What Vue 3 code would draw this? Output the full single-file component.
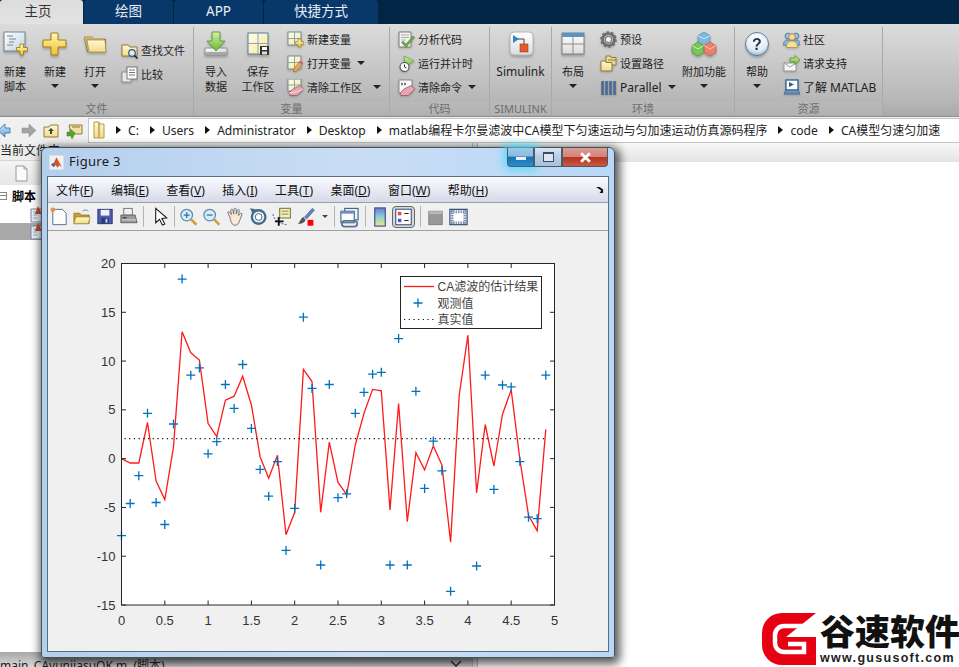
<script setup>
import { computed } from 'vue'

const icons = {
  newScript: `<rect x="2" y="1" width="21" height="19" fill="url(#gPage)" stroke="#76828c"/><path d="M5 5h6M7 8h7M7 11h5M5 14h6" stroke="#77828c"/><path d="M18 13h3.500v3.500h4v3.500h-4v4H18v-4h-3.500v-3.500H18z" fill="url(#gYel)" stroke="#96761a" stroke-width=".8"/>`,
  newPlus: `<path d="M9 2h7v7h8v7h-8v8H9v-8H1V9h8z" fill="url(#gYel)" stroke="#a37f18"/>`,
  open: `<path d="M2 6h8l2 2h12v13H5z" fill="#8d6f35"/><path d="M2 5h8l2 2h11l-1 2H6l3 12H6z" fill="#c9b06a"/><path d="M5 9h18l1 12H7z" fill="url(#gYel2)" stroke="#9c8444" stroke-width=".7"/>`,
  importData: `<path d="M2 17h22v7H2z" fill="url(#gPage)" stroke="#8c8c8c"/><path d="M2 21h22v3H2z" fill="#a8a8a8"/><path d="M9 1h8v9h5L13 20 4 10h5z" fill="url(#gGrn)" stroke="#4d8f22" stroke-width=".8"/>`,
  save: `<rect x="3" y="2" width="20" height="21" fill="url(#gYel3)" stroke="#6f8da8" stroke-width="1.200"/><path d="M13 2v21M3 12.500h20" stroke="#8ba4b8"/><rect x="15" y="15" width="9" height="9" fill="#333"/><rect x="17" y="16" width="5" height="3" fill="#fff"/><rect x="17" y="20.500" width="5" height="3" fill="#ddd"/>`,
  simulink: `<rect x="2" y="1" width="23" height="23" rx="4" fill="url(#gPage2)" stroke="#b4b4b4"/><path d="M8 8h8v6" stroke="#444" fill="none"/><path d="M5 4l6 4-6 4z" fill="#2e86c8"/><rect x="12" y="13" width="8" height="8" fill="#e05a2b" stroke="#a03c18" stroke-width=".6"/>`,
  layout: `<rect x="2" y="2" width="22" height="21" fill="url(#gPage2)" stroke="#7f7f7f"/><rect x="2" y="2" width="22" height="4" fill="#5b93c4"/><path d="M2 13h22M13 6v17" stroke="#8c8c8c"/>`,
  addons: `<path d="M13 1l6 3.500v7L13 15l-6-3.500v-7z" fill="#7fb8de" stroke="#4f8db8" stroke-width=".7"/><path d="M7 4.500l6 3.500 6-3.500" stroke="#dff" fill="none" stroke-width=".7"/><path d="M7 11l6 3.500v7L7 25l-6-3.500v-7z" fill="#7cc457" stroke="#4d9232" stroke-width=".7"/><path d="M1 14.500l6 3.500 6-3.500" stroke="#dfd" fill="none" stroke-width=".7"/><path d="M19 11l6 3.500v7L19 25l-6-3.500v-7z" fill="#e8836a" stroke="#b8583f" stroke-width=".7"/><path d="M13 14.500l6 3.500 6-3.500" stroke="#fdd" fill="none" stroke-width=".7"/>`,
  help: `<circle cx="13" cy="13" r="11.500" fill="url(#gHelp)" stroke="#5c7c9c"/><text x="13" y="18.500" text-anchor="middle" font-family="Liberation Sans" font-weight="700" font-size="16" fill="#1d3450">?</text>`,

  find: `<path d="M1 3h6l2 2h7v9H1z" fill="url(#gYel2)" stroke="#8f7a3e"/><circle cx="11" cy="11" r="3.300" fill="#dcebf5" stroke="#33597d" stroke-width="1.200"/><path d="M13.500 13.500l3 3" stroke="#223" stroke-width="1.600"/>`,
  compare: `<rect x="1" y="6" width="9" height="10" fill="#e8e8e8" stroke="#8f8f8f"/><rect x="6" y="1" width="10" height="12" fill="#fbfbfb" stroke="#7c7c7c"/><path d="M8 4h6M8 6.500h6M8 9h6" stroke="#777"/>`,
  newVar: `<rect x="1" y="1" width="13" height="13" fill="url(#gYel3)" stroke="#6f8da8"/><path d="M7.500 1v13M1 7.500h13" stroke="#8ba4b8"/><path d="M11 8h3v2.500h2.500v3H14V16h-3v-2.500H8.500v-3H11z" fill="url(#gYel)" stroke="#96761a" stroke-width=".6"/>`,
  openVar: `<rect x="1" y="1" width="13" height="13" fill="url(#gYel3)" stroke="#6f8da8"/><path d="M7.500 1v13M1 7.500h13" stroke="#8ba4b8"/><path d="M13 6l3 2-6 8-3.500 1 .5-3.500z" fill="#e6a94f" stroke="#a9702d" stroke-width=".7"/><path d="M13 6l3 2-1 1.400-3-2z" fill="#d85a77"/>`,
  clearVar: `<rect x="1" y="0" width="13" height="12" fill="url(#gYel3)" stroke="#6f8da8"/><path d="M7.500 0v12M1 6h13" stroke="#8ba4b8"/><path d="M6 10l7-3.500 4 3.500-7 6.500H3l-1-2.500z" fill="#e8a6ae" stroke="#8a5060" stroke-width=".7"/><path d="M2 14l7-1 8-3" stroke="#fff" stroke-width=".6" fill="none"/>`,
  analyze: `<path d="M1 1h12v15H1z" fill="#f5f5f5" stroke="#7a7a7a"/><path d="M3 4h8M3 6.500h8M3 9h5" stroke="#aaa"/><path d="M5 10l3 3 7-8 1.500 1.500L8 16.500 3.500 11.500z" fill="#6eae3a" stroke="#4b7d24" stroke-width=".5"/>`,
  runTime: `<path d="M6 1l10 5-9 6z" fill="url(#gGrn)" stroke="#6a9a33" stroke-width=".7"/><circle cx="6.500" cy="12" r="4.500" fill="#fafafa" stroke="#555" stroke-width="1.100"/><path d="M6.500 9.500V12l2 1" stroke="#333" fill="none"/>`,
  clearCmd: `<path d="M1 1h13v13H1z" fill="#fafafa" stroke="#8a8a8a"/><path d="M3 4l2 1-2 1M6 4l2 1-2 1" stroke="#333" fill="none" stroke-width=".8"/><path d="M6 10l7-3.500 4 3.500-7 6.500H3l-1-2.500z" fill="#e8a6ae" stroke="#8a5060" stroke-width=".7"/>`,
  prefs: `<circle cx="8.500" cy="8.500" r="6" fill="none" stroke="#6e6e6e" stroke-width="2.600"/><circle cx="8.500" cy="8.500" r="7.300" fill="none" stroke="#6e6e6e" stroke-width="2" stroke-dasharray="2.400 2.200"/><circle cx="8.500" cy="8.500" r="3.200" fill="#f0f0f0" stroke="#444" stroke-width=".8"/>`,
  setPath: `<path d="M6 1h4l1 1.500h5V10H6z" fill="#f1dc8e" stroke="#8f7a3e"/><path d="M8 5h8" stroke="#8f7a3e"/><path d="M1 6h4l1 1.500h6V16H1z" fill="url(#gYel2)" stroke="#8f7a3e"/>`,
  parallel: `<path d="M1.500 2h2.600v14H1.500zM5.500 2h2.600v14H5.500zM9.500 2h2.600v14H9.500zM13.500 2h2.600v14h-2.600z" fill="#52779f"/><path d="M2 2v14M6 2v14M10 2v14M14 2v14" stroke="#2f4a6a" stroke-width=".6"/>`,
  community: `<circle cx="5" cy="5" r="2.800" fill="#9ec1e2" stroke="#4f7ea8"/><circle cx="13" cy="5" r="2.800" fill="#9ec1e2" stroke="#4f7ea8"/><path d="M0.500 14c0-4 2-5 4.500-5s4 1 4 5zM8 14c0-4 2-5 5-5s4 1 4 5z" fill="#8db3d8" stroke="#4f7ea8" stroke-width=".8"/><circle cx="9" cy="6" r="3.300" fill="#f6d8a8" stroke="#b18c46"/><path d="M3.500 16.500c0-5 2.500-6.500 5.500-6.500s5.500 1.500 5.500 6.500z" fill="#f4e294" stroke="#b18c46" stroke-width=".8"/>`,
  support: `<path d="M1 8h12v8H1z" fill="#f6f6f6" stroke="#999"/><path d="M1 8l6 4 6-4" fill="none" stroke="#999"/><path d="M7 3h5V0.500L17 5l-5 4.500V7H7z" fill="url(#gGrn)" stroke="#4d8f22" stroke-width=".7"/>`,
  learn: `<rect x="3" y="1" width="12" height="10" fill="#fff" stroke="#2f5f8c" stroke-width="1.300"/><path d="M6 3l5 2.500L6 8z" fill="#2f5f8c"/><path d="M3 11h12l2 4H1z" fill="#6a90b8" stroke="#2f5f8c" stroke-width=".7"/>`,

  back: `<path d="M1 8.500L8 2v4h5v5H8v4z" fill="url(#gBlue)" stroke="#3c6a94" stroke-width=".8"/>`,
  forward: `<path d="M16 8.500L9 2v4H2v5h7v4z" fill="#a3a3a3" stroke="#8a8a8a" stroke-width=".5"/>`,
  up: `<path d="M1 5h5l1.500-2H15v12H1z" fill="url(#gYel2)" stroke="#8f7a3e"/><path d="M8 6l3 3H9v3H7V9H5z" fill="#444"/>`,
  browse: `<path d="M3 3h13v9H5z" fill="#f0dfa2" stroke="#8f7a3e"/><path d="M6 5h8" stroke="#8f7a3e"/><path d="M1 10h3V7l5 4-3 6-1-3H1z" fill="#5aa12e" stroke="#3f7b1c" stroke-width=".5"/>`,
  folderTall: `<path d="M2 2h5l1 2h4v14H2z" fill="url(#gYel2)" stroke="#b39a4d"/><path d="M7 2v16" stroke="#c9b06a" stroke-width="2"/>`,
  blank: `<path d="M2 1h8l3 3v12H2z" fill="#fbfbfb" stroke="#9a9a9a"/><path d="M10 1v3h3" fill="none" stroke="#9a9a9a"/>`,
  mfile: `<path d="M1 3h11v13H1z" fill="#eef2f8" stroke="#7b88a0"/><path d="M3 6h4M3 9h4M3 12h4" stroke="#9aa6b8"/><path d="M8 0l4 8H5z" fill="#d4511e"/><path d="M5 8l2-2 1 2z" fill="#3b6fa8"/>`,

  tNew: `<path d="M4 3h10l4 4v12H4z" fill="#fdfdfd" stroke="#4c6f94"/><circle cx="4" cy="3.500" r="2.400" fill="#f08f3c"/>`,
  tOpen: `<path d="M2 7h6l2 2h8v9H2z" fill="#c79f2d" stroke="#80661a" stroke-width=".7"/><path d="M2 18l2-7h15l-2 7z" fill="url(#gYel2)" stroke="#a18226" stroke-width=".7"/><path d="M11 5c2-2 5-2 6 0" stroke="#6e8fb0" fill="none"/>`,
  tSave: `<rect x="3" y="3" width="15" height="15" fill="#4d5db4" stroke="#2b3575"/><rect x="6" y="3.500" width="9" height="6" fill="#f2f2f2"/><rect x="6.500" y="12" width="8" height="6" fill="#2d3a7c"/><rect x="11" y="13" width="2" height="4" fill="#cfd3e8"/>`,
  tPrint: `<rect x="6" y="2" width="9" height="7" fill="#f2f2f2" stroke="#777"/><path d="M3 9h15l2 8H3z" fill="#9a9a9a" stroke="#666"/><path d="M4 14h15" stroke="#ddd"/><rect x="5" y="11" width="4" height="1.500" fill="#444"/>`,
  tCursor: `<path d="M6 2v15l4-3.500 3 6 2.500-1.200-3-5.800 5-.5z" fill="#fff" stroke="#111" stroke-width="1.100"/>`,
  tZoomIn: `<circle cx="9" cy="9" r="6" fill="#d8ecf7" stroke="#5d8db3" stroke-width="1.300"/><path d="M6 9h6M9 6v6" stroke="#2f6ea6" stroke-width="1.300"/><path d="M13.500 13.500l5.500 5.500" stroke="#d79a3a" stroke-width="2.600"/>`,
  tZoomOut: `<circle cx="9" cy="9" r="6" fill="#d8ecf7" stroke="#5d8db3" stroke-width="1.300"/><path d="M6 9h6" stroke="#2f6ea6" stroke-width="1.300"/><path d="M13.500 13.500l5.500 5.500" stroke="#d79a3a" stroke-width="2.600"/>`,
  tHand: `<path d="M5 11L3 7c-.5-1.500 1-2 2-1l1.500 2.500L6 4c0-1.500 2-1.500 2.200 0L9 8l.3-5c.2-1.500 2.100-1.500 2.200 0l.3 5 1-4c.4-1.400 2.200-1 2 .5l-.8 5 1.700-2c1-1 2.300-.2 1.800 1L15 15c-1 3-2 4.500-4.500 4.500C7 19.500 6 16 5 11z" fill="#fbe7d2" stroke="#5a6c80" stroke-width=".9"/>`,
  tRotate: `<circle cx="11" cy="11" r="7" fill="none" stroke="#43698f" stroke-width="2.400"/><circle cx="11" cy="11" r="3.500" fill="#fff" stroke="#43698f"/><path d="M2 2l6 1-3 5z" fill="#43698f"/>`,
  tData: `<rect x="9" y="2" width="11" height="10" fill="#f4eeb0" stroke="#6e6e3a"/><path d="M11 5h7M11 8h7" stroke="#8c8c5a"/><path d="M2 8c1 5 4 9 14 11" fill="none" stroke="#3653b5" stroke-dasharray="2 1.500"/><path d="M8 11v9M4 15.500h9" stroke="#111" stroke-width="2"/>`,
  tBrush: `<path d="M19 2l2 2-8 9-2-2z" fill="#5f86c2" stroke="#33507c" stroke-width=".6"/><path d="M10 11c-3 1-3 4-6 7 4 0 7-1 8-4z" fill="#555"/><rect x="14" y="14" width="6" height="6" fill="#f00"/>`,
  tLink: `<rect x="6" y="2" width="14" height="12" fill="#eaf1f8" stroke="#42658f" stroke-width="1.200"/><rect x="2" y="5" width="14" height="12" fill="#fdfdfd" stroke="#42658f" stroke-width="1.200"/><rect x="2" y="5" width="14" height="2.500" fill="#6f90b8"/><path d="M6 15h10a3 3 0 0 1 0 6H6a3 3 0 0 1 0-6z" fill="none" stroke="#5a7392" stroke-width="1.800"/>`,
  tColorbar: `<rect x="5" y="1.500" width="11" height="19" fill="url(#gBar)" stroke="#34508a" stroke-width="1.200"/>`,
  tLegend: `<rect x="2" y="2" width="18" height="18" fill="#fdfdfd" stroke="#33507c" stroke-width="1.200"/><rect x="4.500" y="5" width="4" height="4" fill="#dd4b4b"/><rect x="4.500" y="13" width="4" height="4" fill="#4b56d8"/><path d="M12 7h5M12 15h5" stroke="#222" stroke-width="1.300"/>`,
  tHide: `<rect x="4" y="5" width="14" height="14" fill="#989898" stroke="#7d7d7d"/><rect x="4" y="5" width="14" height="3" fill="#b7b7b7"/>`,
  tShow: `<rect x="2" y="3" width="18" height="16" fill="#fff" stroke="#33507c" stroke-width="1.300"/><path d="M3 5.500h16M3 17h16" stroke="#7f93b0" stroke-width="3" stroke-dasharray="1.500 1"/><path d="M4.500 4v14M17.500 4v14" stroke="#7f93b0" stroke-width="3" stroke-dasharray="1.500 1"/><rect x="6" y="7.500" width="10" height="8" fill="#fff"/>`,
}

const varRows = [
  { icon: 'newVar', label: '新建变量' },
  { icon: 'openVar', label: '打开变量', arrow: true },
  { icon: 'clearVar', label: '清除工作区', arrow: true },
]
const codeRows = [
  { icon: 'analyze', label: '分析代码' },
  { icon: 'runTime', label: '运行并计时' },
  { icon: 'clearCmd', label: '清除命令', arrow: true },
]
const envRows = [
  { icon: 'prefs', label: '预设' },
  { icon: 'setPath', label: '设置路径' },
  { icon: 'parallel', label: 'Parallel', latin: true, arrow: true },
]
const resRows = [
  { icon: 'community', label: '社区' },
  { icon: 'support', label: '请求支持' },
  { icon: 'learn', label: '了解 MATLAB', latin: true },
]

const crumbs = ['C:', 'Users', 'Administrator', 'Desktop', 'matlab编程卡尔曼滤波中CA模型下匀速运动与匀加速运动仿真源码程序', 'code', 'CA模型匀速匀加速']
const hasCjk = s => /[^\x00-\x7f]/.test(s)

const menus = [
  ['文件', 'F'], ['编辑', 'E'], ['查看', 'V'], ['插入', 'I'],
  ['工具', 'T'], ['桌面', 'D'], ['窗口', 'W'], ['帮助', 'H'],
]

// estimate and measurements, one sample every 0.1 s
const estimate = [0, -0.45, -0.45, 3.7, -2.3, -4.2, 1.2, 13, 10.85, 10.1, 3.6, 2.25, 6, 6.4, 8.45, 5.5, 0.2, -2, 0.35, -7.8, -5.5, 9.15, 7.9, -5.5, 1.7, -2.45, -3.7, 1.4, 4.65, 7.1, 6.95, -5.25, 5.65, -6.45, 0.6, -1.15, 1.3, -0.65, -8.55, 6.5, 12.65, -3.5, 3.5, -0.75, 4.55, 7.05, -0.1, -5.8, -7.4, 3]
const measured = [-7.9, -4.6, -1.75, 4.65, -4.5, -6.75, 3.55, 18.4, 8.55, 9.3, 0.5, 1.75, 7.6, 5.15, 9.65, 3.1, -1.1, -3.85, -0.3, -9.4, -5.1, 14.5, 7.2, -10.9, 7.6, -4, -3.6, 4.65, 6.8, 8.65, 8.85, -10.9, 12.3, -10.9, 6.9, -3.05, 1.8, -1.25, -13.6, 17, 13.8, -11, 8.55, -3.15, 7.55, 7.35, -0.3, -6, -6.15, 8.55]

const plot = { left: 73.5, top: 32.5, width: 433, height: 341.5 }
const px = t => plot.left + (t / 5) * plot.width
const py = v => plot.top + ((20 - v) / 35) * plot.height

const redLine = computed(() => estimate.map((v, i) => `${px(i / 10).toFixed(1)},${py(v).toFixed(1)}`).join(' '))
const plusMarks = computed(() => measured.map((v, i) => {
  const x = px(i / 10)
  const y = py(v)
  return `M${(x - 4.5).toFixed(1)} ${y.toFixed(1)}h9M${x.toFixed(1)} ${(y - 4.5).toFixed(1)}v9`
}).join(''))

const xTicks = [0, 0.5, 1, 1.5, 2, 2.5, 3, 3.5, 4, 4.5, 5]
const yTicks = [20, 15, 10, 5, 0, -5, -10, -15]
const tickPath = computed(() => {
  let d = ''
  const bottom = plot.top + plot.height
  const right = plot.left + plot.width
  xTicks.forEach(t => {
    d += `M${px(t)} ${bottom}v-4.500M${px(t)} ${plot.top}v4.500`
  })
  yTicks.forEach(v => {
    d += `M${plot.left} ${py(v)}h4.500M${right} ${py(v)}h-4.500`
  })
  return d
})
</script>

<template>
  <div class="screen">
    <svg class="defs" width="0" height="0">
      <defs>
        <linearGradient id="gYel" x1="0" y1="0" x2="0" y2="1"><stop offset="0" stop-color="#fff7b0" /><stop offset="1" stop-color="#eec22c" /></linearGradient>
        <linearGradient id="gYel2" x1="0" y1="0" x2="0" y2="1"><stop offset="0" stop-color="#fff9d4" /><stop offset="1" stop-color="#f1dc86" /></linearGradient>
        <linearGradient id="gYel3" x1="0" y1="0" x2="1" y2="1"><stop offset="0" stop-color="#fffde8" /><stop offset="1" stop-color="#f8e7a0" /></linearGradient>
        <linearGradient id="gPage" x1="0" y1="0" x2="1" y2="1"><stop offset="0" stop-color="#ffffff" /><stop offset="1" stop-color="#c2d3e0" /></linearGradient>
        <linearGradient id="gPage2" x1="0" y1="0" x2="0" y2="1"><stop offset="0" stop-color="#ffffff" /><stop offset="1" stop-color="#dcdcdc" /></linearGradient>
        <linearGradient id="gGrn" x1="0" y1="0" x2="0" y2="1"><stop offset="0" stop-color="#d4ee9e" /><stop offset="1" stop-color="#6eb83a" /></linearGradient>
        <linearGradient id="gBlue" x1="0" y1="0" x2="0" y2="1"><stop offset="0" stop-color="#d6eafa" /><stop offset="1" stop-color="#5fa0d8" /></linearGradient>
        <linearGradient id="gBar" x1="0" y1="0" x2="0" y2="1"><stop offset="0" stop-color="#6f78d8" /><stop offset=".5" stop-color="#8fd0d0" /><stop offset="1" stop-color="#f6e58a" /></linearGradient>
        <radialGradient id="gHelp" cx=".5" cy=".3" r=".8"><stop offset="0" stop-color="#ffffff" /><stop offset=".6" stop-color="#e4edf6" /><stop offset="1" stop-color="#7ea6c9" /></radialGradient>
      </defs>
    </svg>

    <div class="tabs">
      <div class="tab tab-active">主页</div>
      <div class="tab">绘图</div>
      <div class="tab">APP</div>
      <div class="tab tab-wide">快捷方式</div>
    </div>

    <div class="ribbon">
      <section class="group g-file">
        <div class="group-body">
          <div class="big w30">
            <svg class="big-icon" viewBox="0 0 26 26" v-html="icons.newScript" />
            <span>新建</span><span>脚本</span>
          </div>
          <div class="big w40 ml5">
            <svg class="big-icon" viewBox="0 0 26 26" v-html="icons.newPlus" />
            <span>新建</span><i class="drop" />
          </div>
          <div class="big w40">
            <svg class="big-icon" viewBox="0 0 26 26" v-html="icons.open" />
            <span>打开</span><i class="drop" />
          </div>
          <div class="col col-two ml6">
            <div class="row"><svg class="small-icon" viewBox="0 0 17 17" v-html="icons.find" /><span>查找文件</span></div>
            <div class="row"><svg class="small-icon" viewBox="0 0 17 17" v-html="icons.compare" /><span>比较</span></div>
          </div>
        </div>
        <div class="group-name">文件</div>
      </section>

      <section class="group g-var">
        <div class="group-body">
          <div class="big w44">
            <svg class="big-icon" viewBox="0 0 26 26" v-html="icons.importData" />
            <span>导入</span><span>数据</span>
          </div>
          <div class="big w40">
            <svg class="big-icon" viewBox="0 0 26 26" v-html="icons.save" />
            <span>保存</span><span>工作区</span>
          </div>
          <div class="col ml9">
            <div v-for="r in varRows" :key="r.label" class="row">
              <svg class="small-icon" viewBox="0 0 17 17" v-html="icons[r.icon]" />
              <span>{{ r.label }}</span>
              <i v-if="r.arrow" class="drop drop-inline" :class="{ 'drop-far': r.label === '清除工作区' }" />
            </div>
          </div>
        </div>
        <div class="group-name">变量</div>
      </section>

      <section class="group g-code">
        <div class="group-body">
          <div class="col ml8">
            <div v-for="r in codeRows" :key="r.label" class="row">
              <svg class="small-icon" viewBox="0 0 17 17" v-html="icons[r.icon]" />
              <span>{{ r.label }}</span>
              <i v-if="r.arrow" class="drop drop-inline" />
            </div>
          </div>
        </div>
        <div class="group-name">代码</div>
      </section>

      <section class="group g-sim">
        <div class="group-body">
          <div class="big w61">
            <svg class="big-icon" viewBox="0 0 26 26" v-html="icons.simulink" />
            <span class="latin">Simulink</span>
          </div>
        </div>
        <div class="group-name">SIMULINK</div>
      </section>

      <section class="group g-env">
        <div class="group-body">
          <div class="big w42">
            <svg class="big-icon" viewBox="0 0 26 26" v-html="icons.layout" />
            <span>布局</span><i class="drop" />
          </div>
          <div class="col ml6 w79">
            <div v-for="r in envRows" :key="r.label" class="row">
              <svg class="small-icon" viewBox="0 0 17 17" v-html="icons[r.icon]" />
              <span :class="{ latin: r.latin }">{{ r.label }}</span>
              <i v-if="r.arrow" class="drop drop-inline" />
            </div>
          </div>
          <div class="big w50">
            <svg class="big-icon" viewBox="0 0 26 26" v-html="icons.addons" />
            <span>附加功能</span><i class="drop" />
          </div>
        </div>
        <div class="group-name">环境</div>
      </section>

      <section class="group g-res">
        <div class="group-body">
          <div class="big w44">
            <svg class="big-icon" viewBox="0 0 26 26" v-html="icons.help" />
            <span>帮助</span><i class="drop" />
          </div>
          <div class="col ml4">
            <div v-for="r in resRows" :key="r.label" class="row">
              <svg class="small-icon" viewBox="0 0 17 17" v-html="icons[r.icon]" />
              <span :class="{ latin: r.latin }">{{ r.label }}</span>
            </div>
          </div>
        </div>
        <div class="group-name">资源</div>
      </section>
      <div class="ribbon-rest" />
    </div>

    <div class="pathbar">
      <div class="nav">
        <svg class="nav-icon nav-back" viewBox="0 0 17 17" v-html="icons.back" />
        <svg class="nav-icon" viewBox="0 0 17 17" v-html="icons.forward" />
        <svg class="nav-icon" viewBox="0 0 17 17" v-html="icons.up" />
        <svg class="nav-icon" viewBox="0 0 17 17" v-html="icons.browse" />
      </div>
      <div class="address">
        <svg class="addr-folder" viewBox="0 0 14 20" v-html="icons.folderTall" />
        <template v-for="c in crumbs" :key="c">
          <i class="crumb-arrow" />
          <span class="crumb" :class="{ 'crumb-cjk': hasCjk(c) }">{{ c }}</span>
        </template>
      </div>
    </div>

    <div class="workspace">
      <div class="files">
        <div class="panel-head">当前文件夹</div>
        <div class="files-tools">
          <svg class="blank-icon" viewBox="0 0 15 17" v-html="icons.blank" />
        </div>
        <div class="tree">
          <div class="tree-head"><i class="minus" /><b>脚本</b></div>
          <div class="tree-row"><svg class="m-icon" viewBox="0 0 13 17" v-html="icons.mfile" /></div>
          <div class="tree-row tree-sel"><svg class="m-icon" viewBox="0 0 13 17" v-html="icons.mfile" /></div>
        </div>
        <div class="details">
          <span class="details-name">main_CAyunjiasuOK.m (脚本)</span>
          <svg class="chev" viewBox="0 0 12 7"><path d="M1 1l5 5 5-5" fill="none" stroke="#333" stroke-width="1.600" /></svg>
        </div>
      </div>
      <div class="split" />
      <div class="editor">
        <div class="editor-head" />
      </div>
    </div>

    <div class="figure">
      <div class="fig-title">
        <svg class="fig-logo" viewBox="0 0 16 16">
          <rect x="0" y="0" width="16" height="16" fill="#eef2f6" stroke="#a9b6c4" stroke-width=".6" />
          <path d="M2 10l3-1.500 3-6 2 4 4 6.500-3-2-2 2.500-2-3z" fill="#d9541e" />
          <path d="M2 10l3-1.500 2 2.500-2 2z" fill="#3b6fa8" />
        </svg>
        <span class="fig-name">Figure 3</span>
        <div class="win-btns">
          <div class="win-btn win-min"><i /></div>
          <div class="win-btn win-max"><i /></div>
          <div class="win-btn win-close">
            <svg viewBox="0 0 12 10" width="13" height="11"><path d="M2 1l8 8M10 1L2 9" stroke="#fff" stroke-width="2.600" /></svg>
          </div>
        </div>
      </div>
      <div class="fig-body">
        <div class="fig-menu">
          <span v-for="m in menus" :key="m[0]" class="fig-menu-item">{{ m[0] }}(<u>{{ m[1] }}</u>)</span>
          <svg class="menu-dock" viewBox="0 0 9 8"><path d="M0 1h4l4 3v4H4l2-3z" fill="#111" /></svg>
        </div>
        <div class="fig-tools">
          <svg class="t-icon" viewBox="0 0 22 22" v-html="icons.tNew" />
          <svg class="t-icon" viewBox="0 0 22 22" v-html="icons.tOpen" />
          <svg class="t-icon" viewBox="0 0 22 22" v-html="icons.tSave" />
          <svg class="t-icon" viewBox="0 0 22 22" v-html="icons.tPrint" />
          <i class="t-sep s-a" />
          <svg class="t-icon" viewBox="0 0 22 22" v-html="icons.tCursor" />
          <i class="t-sep s-b" />
          <svg class="t-icon t-wide" viewBox="0 0 22 22" v-html="icons.tZoomIn" />
          <svg class="t-icon t-wide" viewBox="0 0 22 22" v-html="icons.tZoomOut" />
          <svg class="t-icon t-wide" viewBox="0 0 22 22" v-html="icons.tHand" />
          <svg class="t-icon t-wide" viewBox="0 0 22 22" v-html="icons.tRotate" />
          <svg class="t-icon t-wide" viewBox="0 0 22 22" v-html="icons.tData" />
          <svg class="t-icon t-wide" viewBox="0 0 22 22" v-html="icons.tBrush" />
          <i class="t-drop" />
          <i class="t-sep s-c" />
          <svg class="t-icon" viewBox="0 0 22 22" v-html="icons.tLink" />
          <i class="t-sep s-d" />
          <svg class="t-icon" viewBox="0 0 22 22" v-html="icons.tColorbar" />
          <svg class="t-icon t-on" viewBox="0 0 22 22" v-html="icons.tLegend" />
          <i class="t-sep s-e" />
          <svg class="t-icon" viewBox="0 0 22 22" v-html="icons.tHide" />
          <svg class="t-icon" viewBox="0 0 22 22" v-html="icons.tShow" />
        </div>
        <div class="fig-canvas">
          <svg class="plot" width="561" height="421" viewBox="0 0 561 421">
            <rect :x="plot.left" :y="plot.top" :width="plot.width" :height="plot.height" fill="#fff" />
            <polyline :points="redLine" fill="none" stroke="#ff1a1a" stroke-width="1.300" />
            <path :d="plusMarks" fill="none" stroke="#0072bd" stroke-width="1.300" />
            <line :x1="plot.left + 3" :x2="px(4.9)" :y1="py(2.05)" :y2="py(2.05)" stroke="#111" stroke-width="1.200" stroke-dasharray="1.200 3.500" />
            <path :d="tickPath" stroke="#262626" fill="none" />
            <rect :x="plot.left" :y="plot.top" :width="plot.width" :height="plot.height" fill="none" stroke="#262626" />
            <g class="ticks">
              <text v-for="t in xTicks" :key="t" :x="px(t)" :y="plot.top + plot.height + 20" text-anchor="middle">{{ t }}</text>
              <text v-for="v in yTicks" :key="v" :x="plot.left - 6" :y="py(v) + 4.500" text-anchor="end">{{ v }}</text>
            </g>
            <g class="legend">
              <rect x="352.5" y="45.500" width="141" height="52" fill="#fff" stroke="#262626" />
              <line x1="356" x2="386" y1="55.500" y2="55.500" stroke="#ff1a1a" stroke-width="1.300" />
              <path d="M365.500 72h9M370 67.500v9" stroke="#0072bd" stroke-width="1.300" />
              <line x1="356" x2="386" y1="88.500" y2="88.500" stroke="#111" stroke-width="1.200" stroke-dasharray="1.200 3.500" />
              <text x="389.5" y="59.500">CA滤波的估计结果</text>
              <text x="389.5" y="77">观测值</text>
              <text x="389.5" y="93">真实值</text>
            </g>
          </svg>
        </div>
      </div>
    </div>

    <div class="brand">
      <svg class="brand-mark" viewBox="0 0 54 52">
        <path d="M54 0H20A20 20 0 0 0 0 20v12a20 20 0 0 0 20 20h34V24H24v0z" fill="#e60012" />
        <path d="M54 13H22a9 9 0 0 0-9 9v8a9 9 0 0 0 9 9h20V31H26" fill="none" stroke="#fff" stroke-width="4.500" />
      </svg>
      <div class="brand-text">
        <div class="brand-cn">谷速软件</div>
        <div class="brand-url">www.gususoft.com</div>
      </div>
    </div>
  </div>
</template>

<style scoped>
.screen {
  position: relative;
  width: 959px;
  height: 667px;
  overflow: hidden;
  background: #fff;
  font-family: "Noto Sans", "Noto Sans CJK SC", sans-serif;
  color: #222;
}
.defs {
  position: absolute;
}

.tabs {
  display: flex;
  height: 24px;
  background: #012544;
}
.tab {
  width: 89px;
  margin-right: 1px;
  background: #08386a;
  color: #e8eef5;
  font-size: 13.5px;
  line-height: 23px;
  text-align: center;
  border-radius: 3px 3px 0 0;
}
.tab-wide {
  width: 114px;
}
.tab-active {
  width: 76px;
  padding-right: 7px;
  background: linear-gradient(#dddddd, #e2e2e2);
  color: #333;
}

.ribbon {
  display: flex;
  height: 92px;
  background: linear-gradient(#dcdcdc, #b6b6b6 84%, #a9a9a9);
}
.group {
  display: flex;
  flex-direction: column;
  flex: none;
  box-sizing: border-box;
  border-right: 1px solid #a9a9a9;
  margin-top: 3px;
}
.g-file { width: 194px; }
.g-var { width: 196px; }
.g-code { width: 100px; }
.g-sim { width: 62px; }
.g-env { width: 183px; }
.g-res { width: 148px; }
.group-body {
  display: flex;
  height: 75px;
}
.group-name {
  height: 13px;
  background: linear-gradient(#b9b9b9, #b2b2b2);
  color: #6e6e6e;
  font-size: 11px;
  line-height: 13px;
  text-align: center;
}
.ribbon-rest {
  flex: 1;
}
.big {
  display: flex;
  flex-direction: column;
  align-items: center;
  flex: none;
  padding-top: 4px;
  font-size: 11px;
  line-height: 15px;
  white-space: nowrap;
}
.w30 { width: 30px; }
.w40 { width: 40px; }
.w42 { width: 42px; }
.w44 { width: 44px; }
.w50 { width: 50px; }
.w61 { width: 61px; }
.w79 { width: 79px; }
.ml4 { margin-left: 4px; }
.ml5 { margin-left: 5px; }
.ml6 { margin-left: 6px; }
.ml8 { margin-left: 8px; }
.ml9 { margin-left: 9px; }
.big-icon {
  width: 26px;
  height: 26px;
  margin-bottom: 7px;
  filter: drop-shadow(0 2px 1px rgba(0, 0, 0, 0.22));
}
.latin {
  font-size: 12px;
}
.drop {
  display: block;
  width: 0;
  height: 0;
  margin-top: 5px;
  border-style: solid;
  border-width: 4px 4px 0;
  border-color: #222 transparent transparent;
}
.drop-inline {
  margin: 0 0 0 6px;
}
.drop-far {
  margin-left: 11px;
}
.col {
  display: flex;
  flex-direction: column;
  flex: none;
}
.col-two {
  padding-top: 11px;
}
.row {
  display: flex;
  align-items: center;
  height: 24px;
  font-size: 11px;
  white-space: nowrap;
}
.small-icon {
  width: 17px;
  height: 17px;
  margin-right: 3px;
  flex: none;
  filter: drop-shadow(0 1px 1px rgba(0, 0, 0, 0.2));
}

.pathbar {
  display: flex;
  align-items: center;
  height: 27px;
  box-sizing: border-box;
  border-top: 1px solid #8e8e8e;
  background: #f0f0f0;
}
.nav {
  display: flex;
  align-items: center;
  gap: 6px;
  width: 88px;
  flex: none;
}
.nav-icon {
  width: 17px;
  height: 17px;
  flex: none;
}
.nav-back {
  margin-left: -3px;
}
.address {
  display: flex;
  align-items: center;
  flex: 1;
  height: 23px;
  padding-left: 3px;
  background: #fff;
  border: 1px solid #c4c4c4;
  border-right: none;
  font-size: 12.1px;
  white-space: nowrap;
  overflow: hidden;
}
.addr-folder {
  width: 14px;
  height: 20px;
  margin-right: 10px;
  flex: none;
}
.crumb-arrow {
  width: 0;
  height: 0;
  margin-right: 7px;
  flex: none;
  border-style: solid;
  border-width: 4px 0 4px 5px;
  border-color: transparent transparent transparent #111;
}
.crumb {
  margin-right: 11px;
  flex: none;
}
.crumb-cjk {
  font-size: 12px;
}

.workspace {
  display: flex;
  height: 524px;
}
.files {
  display: flex;
  flex-direction: column;
  width: 472px;
  flex: none;
}
.panel-head {
  height: 17px;
  background: #ededed;
  font-size: 12px;
  line-height: 15px;
}
.files-tools {
  height: 24px;
  background: linear-gradient(#f4f4f4, #e6e6e6);
  border-top: 1px solid #d6d6d6;
}
.blank-icon {
  display: block;
  width: 15px;
  height: 17px;
  margin: 4px 0 0 14px;
}
.tree {
  flex: 1;
  background: #fff;
}
.tree-head {
  display: flex;
  align-items: center;
  height: 21px;
  font-size: 12px;
  color: #000;
}
.minus {
  width: 6px;
  height: 6px;
  margin-right: 5px;
  border: 1px solid #888;
  border-left: none;
  background: linear-gradient(#888, #888) center / 100% 1px no-repeat #fff;
}
.tree-row {
  height: 17px;
  display: flex;
  align-items: center;
  padding-left: 30px;
}
.tree-sel {
  background: #a9a9a9;
}
.m-icon {
  width: 13px;
  height: 17px;
}
.details {
  display: flex;
  align-items: flex-start;
  justify-content: space-between;
  height: 15px;
  box-sizing: border-box;
  padding: 6px 10px 0 0;
  overflow: hidden;
  background: linear-gradient(#a8a8a8, #d8d8d8);
  font-size: 12px;
  line-height: 15px;
  white-space: nowrap;
}
.details-name {
  word-spacing: 3px;
}
.chev {
  width: 12px;
  height: 7px;
  margin-top: 2px;
}
.split {
  width: 6px;
  flex: none;
  background: #e4e4e4;
  border-left: 1px solid #bbb;
  border-right: 1px solid #bbb;
  box-sizing: border-box;
}
.editor {
  flex: 1;
}
.editor-head {
  height: 19px;
  background: linear-gradient(#f7f7f7, #e4e4e4);
}

/* Figure window floats over the desktop */
.figure {
  position: absolute;
  left: 41px;
  top: 147px;
  width: 574px;
  height: 511px;
  box-sizing: border-box;
  display: flex;
  flex-direction: column;
  padding: 0 5px 5px;
  border: 1px solid #44505c;
  border-radius: 6px 6px 3px 3px;
  background: linear-gradient(90deg, #b4cfec, #c9def4 55%, #b9d7f7);
  box-shadow: 2px 3px 10px 3px rgba(0, 0, 0, 0.65);
}
.fig-title {
  display: flex;
  height: 28px;
  flex: none;
}
.fig-logo {
  width: 15px;
  height: 15px;
  margin: 7px 5px 0 2px;
}
.fig-name {
  font-size: 13px;
  line-height: 27px;
  letter-spacing: 0.3px;
  color: #1a1a1a;
}
.win-btns {
  display: flex;
  height: 19px;
  margin-left: auto;
  margin-right: 1px;
}
.win-btn {
  display: flex;
  align-items: center;
  justify-content: center;
  box-sizing: border-box;
  height: 19px;
  border: 1px solid #4a5a6a;
  border-top: none;
}
.win-min {
  width: 27px;
  border-radius: 0 0 0 4px;
  background: linear-gradient(#9fc8e8 0, #8bbce0 45%, #1673b3 50%, #2b8ccc);
  box-shadow: 0 0 9px 3px rgba(60, 220, 255, 0.8);
}
.win-min i {
  display: block;
  width: 10px;
  height: 3px;
  margin-top: 3px;
  background: #eef;
}
.win-max {
  width: 28px;
  background: linear-gradient(#d8e5f2, #b6cde2 50%, #a8c0d8);
}
.win-max i {
  display: block;
  width: 9px;
  height: 7px;
  border: 2px solid #3d4a58;
  border-width: 2px 1px 1px;
  background: #dbe6f2;
}
.win-close {
  width: 46px;
  border-radius: 0 0 4px 0;
  background: linear-gradient(#dc9d94 0, #d38377 48%, #b8321f 52%, #c65a45);
}
.fig-body {
  display: flex;
  flex-direction: column;
  flex: 1;
  border: 1px solid #5b6c7c;
  background: #f0f0f0;
  min-height: 0;
}
.fig-menu {
  display: flex;
  align-items: center;
  flex: none;
  height: 26px;
  box-sizing: border-box;
  padding-left: 8px;
  gap: 17.5px;
  background: linear-gradient(#fbfbfd, #d6d9ea);
  font-size: 12px;
  color: #111;
  border-bottom: 1px solid #a0a0a0;
}
.menu-dock {
  width: 8px;
  height: 7px;
  margin-left: auto;
  margin-right: 4px;
}
.fig-tools {
  display: flex;
  align-items: center;
  flex: none;
  height: 28px;
  box-sizing: border-box;
  border-bottom: 1px solid #a0a0a0;
  background: #f0f0f0;
}
.t-icon {
  box-sizing: border-box;
  width: 23px;
  height: 22px;
  padding: 0 1px;
  flex: none;
}
.t-wide {
  width: 23.3px;
}
.t-on {
  background: #d8d8d8;
  border: 1px solid #666;
  border-radius: 4px;
}
.t-sep {
  width: 1px;
  height: 21px;
  background: #b4b4b4;
  flex: none;
}
.s-a { margin: 0 5px 0 3px; }
.s-b { margin: 0 2px; }
.s-c { margin: 0 3px 0 6px; }
.s-d { margin: 0 3px 0 4px; }
.s-e { margin: 0 3px 0 5px; }
.t-drop {
  width: 0;
  height: 0;
  margin-left: 5px;
  flex: none;
  border-style: solid;
  border-width: 3px 3px 0;
  border-color: #444 transparent transparent;
}
.fig-canvas {
  flex: 1;
  min-height: 0;
  background: #f0f0f0;
}
.plot {
  display: block;
}
.ticks text {
  font-family: "Liberation Sans", sans-serif;
  font-size: 13px;
  fill: #333;
}
.legend text {
  font-family: "Liberation Sans", "Noto Sans CJK SC", sans-serif;
  font-size: 12px;
  fill: #444;
}

.brand {
  position: absolute;
  left: 762px;
  top: 613px;
  display: flex;
  gap: 4px;
}
.brand-mark {
  width: 54px;
  height: 52px;
  flex: none;
}
.brand-cn {
  margin-top: -2px;
  font-family: "Noto Sans CJK SC", sans-serif;
  font-weight: 900;
  font-size: 35px;
  line-height: 38px;
  color: #111;
  white-space: nowrap;
}
.brand-url {
  margin-top: 1px;
  font-family: "Liberation Sans", sans-serif;
  font-weight: 700;
  font-size: 12.5px;
  letter-spacing: 1.3px;
  line-height: 16px;
  color: #222;
  white-space: nowrap;
}
</style>

<style>
html,
body {
  margin: 0;
  background: #fff;
}
</style>
